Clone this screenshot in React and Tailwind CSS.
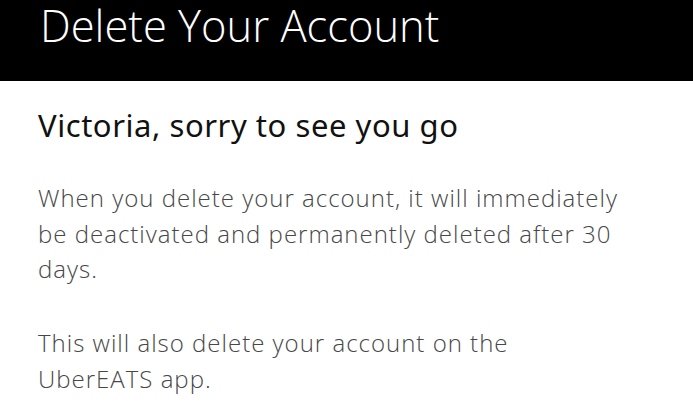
export default function App() {
  return (
    <div className="w-[693px] h-[407px] bg-white overflow-hidden" style={{ fontFamily: '"Open Sans", sans-serif' }}>
      <div className="h-[81px] bg-black px-[40px] pt-[2px]">
        <h1 className="text-white text-[43.5px] leading-[48px] font-light">Delete Your Account</h1>
      </div>
      <div className="px-[38px] pt-[24px]">
        <h2 className="text-[#111] text-[31px] leading-[40px] font-normal tracking-[0.55px]" style={{ fontFamily: '"Noto Sans", sans-serif' }}>Victoria, sorry to see you go</h2>
        <div className="w-[588px]">
          <p className="mt-[35px] text-[#474747] text-[24px] leading-[35.5px] font-light tracking-[1px]">
            When you delete your account, it will immediately be deactivated and permanently deleted after 30 days.
          </p>
          <p className="mt-[38.5px] text-[#474747] text-[24px] leading-[35.5px] font-light tracking-[1px]">
            This will also delete your account on the UberEATS app.
          </p>
        </div>
      </div>
    </div>
  );
}
